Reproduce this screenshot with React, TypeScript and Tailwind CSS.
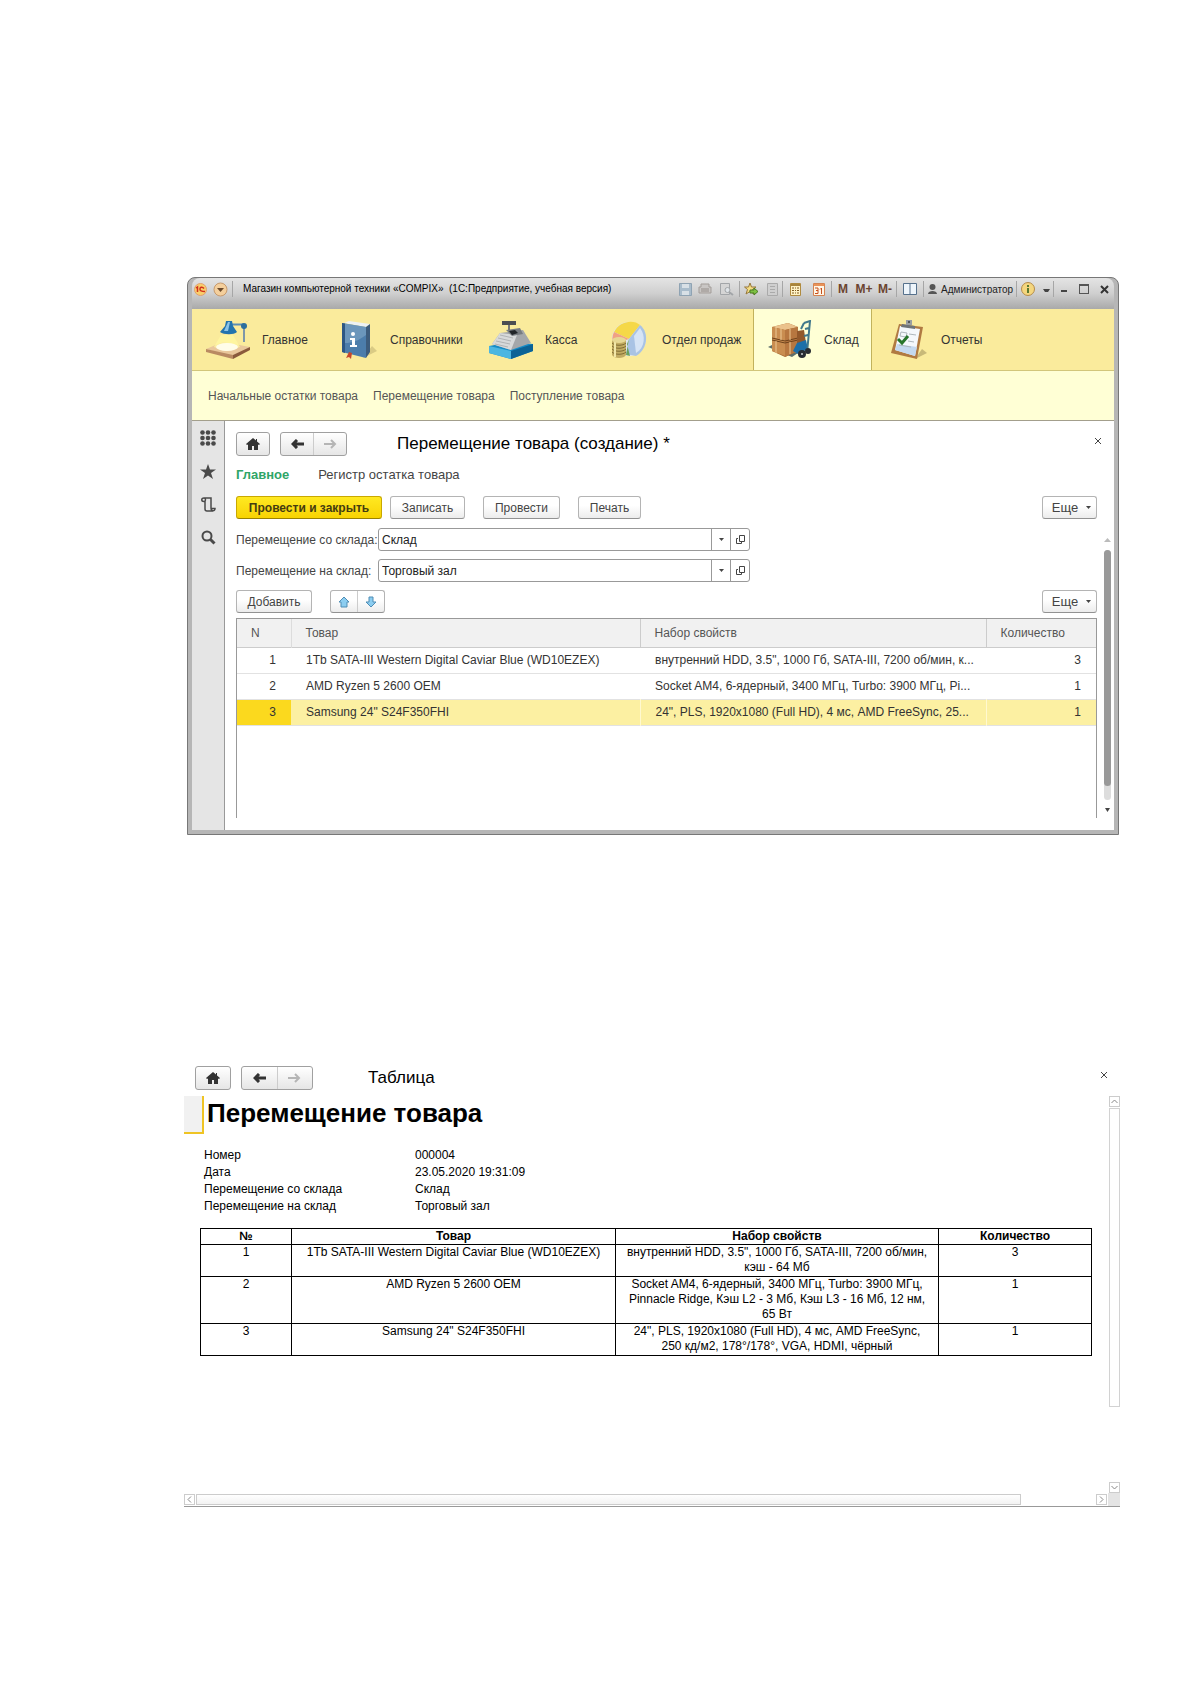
import { useState } from 'react';
import type { ReactNode } from 'react';

interface Product {
  id: number;
  name: string;
  short: string;
  full: string;
  count: number;
}

const products: Product[] = [
  {
    id: 1,
    name: '1Tb SATA-III Western Digital Caviar Blue (WD10EZEX)',
    short: 'внутренний HDD, 3.5", 1000 Гб, SATA-III, 7200 об/мин, к...',
    full: 'внутренний HDD, 3.5", 1000 Гб, SATA-III, 7200 об/мин, кэш - 64 Мб',
    count: 3,
  },
  {
    id: 2,
    name: 'AMD Ryzen 5 2600 OEM',
    short: 'Socket AM4, 6-ядерный, 3400 МГц, Turbo: 3900 МГц, Pi...',
    full: 'Socket AM4, 6-ядерный, 3400 МГц, Turbo: 3900 МГц, Pinnacle Ridge, Кэш L2 - 3 Мб, Кэш L3 - 16 Мб, 12 нм, 65\u00a0Вт',
    count: 1,
  },
  {
    id: 3,
    name: 'Samsung 24" S24F350FHI',
    short: '24", PLS, 1920x1080 (Full HD), 4 мс, AMD FreeSync, 25...',
    full: '24", PLS, 1920x1080 (Full HD), 4 мс, AMD FreeSync, 250\u00a0кд/м2, 178°/178°, VGA, HDMI, чёрный',
    count: 1,
  },
];

const details = [
  ['Номер', '000004'],
  ['Дата', '23.05.2020 19:31:09'],
  ['Перемещение со склада', 'Склад'],
  ['Перемещение на склад', 'Торговый зал'],
];

/* Section icons */

function LampIcon() {
  return (
    <svg width="44" height="40" viewBox="0 0 44 40">
      <path d="M0 29 17 22 44 27 27 37Z" fill="#e9c79b" />
      <path d="M0 29 27 35V39L0 32Z" fill="#b98a62" />
      <path d="M27 35 44 27V30L27 39Z" fill="#8a5a3c" />
      <path d="M15 15 8 27 20 31 34 27 27 15Z" fill="#fff7a0" opacity=".8" />
      <ellipse cx="21" cy="27" rx="11" ry="4" fill="#fffde8" />
      <path d="M26 4.500H38" stroke="#5b8db5" strokeWidth="2" />
      <path d="M38 7V22" stroke="#7f97a8" strokeWidth="2" />
      <path d="M20 1h6l1 5 4 6c-3 3-13 3-17 0l5-6Z" fill="#2374ae" />
      <path d="M22 2h2l-2 9h-4Z" fill="#8cc4e6" />
      <circle cx="38" cy="6" r="3" fill="#2d6f9e" />
    </svg>
  );
}

function BookIcon() {
  return (
    <svg width="37" height="40" viewBox="0 0 37 40">
      <path d="M22 38 36 31 31 26Z" fill="#b9ab6c" opacity=".5" />
      <path d="M3 3 8 1 29 4 25 7Z" fill="#edf2f4" />
      <path d="M25 7 29 4V32L25 38Z" fill="#3d5c7c" />
      <path d="M1 3 25 7V38L1 32Z" fill="#4c7dab" />
      <path d="M1 3 4 3.500V33L1 32Z" fill="#2d5784" />
      <path d="M4 3.500 25 7V15C17 21 11 23 4 23Z" fill="#80a6c6" opacity=".6" />
      <circle cx="12" cy="14" r="2" fill="#fff" />
      <path d="M9 18H14V25H16V27H9V25H11V20H9Z" fill="#fff" />
      <path d="M8 32 5 38 8 37 10 39 11 33Z" fill="#c8472b" />
    </svg>
  );
}

function RegisterIcon() {
  return (
    <svg width="44" height="40" viewBox="0 0 44 40">
      <path d="M0 26 22 22 44 24V31L22 39 0 33Z" fill="#168cc7" />
      <path d="M0 26 22 31V39L0 33Z" fill="#4cb6e1" />
      <path d="M22 31 44 24V31L22 39Z" fill="#0b6296" />
      <path d="M3 24 11 13 34 10 42 23 22 30Z" fill="#a4a7aa" />
      <path d="M3 24 11 13 28 15 22 30Z" fill="#d7d9da" />
      <path d="M7 21 21 24M9 18 22 21M11 15 24 18M6 24 19 27" stroke="#b0b3b5" strokeWidth="1" />
      <path d="M17 10 31 8 34 14 23 16Z" fill="#777c81" />
      <path d="M20 11 26 10 29 13 23 15Z" fill="#202428" />
      <path d="M20 3V10" stroke="#777" strokeWidth="2" />
      <rect x="13" y="1" width="14" height="4" fill="#4c4e51" />
    </svg>
  );
}

function SalesIcon() {
  return (
    <svg width="42" height="40" viewBox="-1 0 42 40">
      <circle cx="20" cy="19" r="17" fill="#dfe6ef" />
      <path d="M20 19 5 12C10 1 25-1 31 5Z" fill="#f5d848" />
      <path d="M20 19 5 12C3 16 3 20 4 24L14 21Z" fill="#f0a184" />
      <path d="M20 19 31 5C41 13 38 30 27 36L17 34Z" fill="#a9c3e4" />
      <path d="M25 16 31 8C37 15 36 28 27 33Z" fill="#d6e4f5" />
      <path d="M18 24 20 19 17 35 21 36Z" fill="#69a25c" />
      <path d="M3 20V35C5 39 15 39 17 35V20Z" fill="#c2ac62" />
      <path d="M3 23C6 26 14 26 17 23M3 26C6 29 14 29 17 26M3 29C6 32 14 32 17 29M3 32C6 35 14 35 17 32" stroke="#806c34" fill="none" />
      <path d="M6 22V37" stroke="#f2e7a8" strokeWidth="2" />
      <ellipse cx="10" cy="20" rx="7" ry="3" fill="#e7d894" />
    </svg>
  );
}

function StoreIcon() {
  return (
    <svg width="44" height="40" viewBox="0 0 44 40">
      <path d="M0 27 4 25 30 33 24 37Z" fill="#5f6f6b" />
      <path d="M4 7 20 3 30 7V31L17 37 4 31Z" fill="#a96a33" />
      <path d="M4 7 20 3 30 7 17 10Z" fill="#ebc28c" />
      <path d="M4 7 17 10V36L4 31Z" fill="#c98d50" />
      <path d="M17 10 30 7V31L17 37Z" fill="#b77740" />
      <path d="M4 18 17 21 30 18M4 20 17 23 30 20" stroke="#6e421c" fill="none" />
      <path d="M8 7V18M13 9V20M8 21V33M22 9V20M22 22V34" stroke="#edc994" />
      <path d="M29 11 36 10 38 23 29 26Z" fill="#92582b" />
      <path d="M29 23 38 20 40 29 30 34 25 31Z" fill="#1d6fa8" />
      <path d="M36 3 42 1 39 33M36 3 33 9M37 9 41 8M36 16 40 15" stroke="#41788c" strokeWidth="2" fill="none" />
      <circle cx="34" cy="34" r="4" fill="#292d31" />
      <circle cx="40" cy="31" r="3" fill="#292d31" />
      <circle cx="34" cy="34" r="1" fill="#c8ced0" />
    </svg>
  );
}

function ReportIcon() {
  return (
    <svg width="43" height="42" viewBox="-5 0 43 42">
      <path d="M24 40 36 34 31 30Z" fill="#a79760" opacity=".6" />
      <path d="M8 5 32 8 26 40 0 34Z" fill="#b07a42" />
      <path d="M9 7 29 10 24 37 4 31Z" fill="#f4f8fc" />
      <path d="M6 25 26 28 24 37 4 31Z" fill="#c4d9f0" />
      <path d="M11 5 24 7V10L10 8Z" fill="#6f7478" />
      <path d="M15 1h6v5h-6Z" fill="#9a9ea2" />
      <circle cx="18" cy="3" r="1" fill="#3b3e42" />
      <path d="M10 13 16 14 15 18 9 17ZM18 15 25 16M17 22 23 23M8 26 20 28" stroke="#aeb7bd" fill="none" />
      <path d="M7 20 11 24 17 17" stroke="#27752b" strokeWidth="3" fill="none" />
    </svg>
  );
}

/* Small icons */

function HomeIcon() {
  return (
    <svg width="14" height="12" viewBox="0 0 14 12">
      <path d="M7 0 0 6 1 7 2 6.500V12H6V8H8V12H12V6.500L13 7 14 6 11 3.500V1H10V2.500Z" fill="#333" />
    </svg>
  );
}

function ArrowIcon({ right = false }: { right?: boolean }) {
  return (
    <svg width="13" height="10" viewBox="0 0 13 10" fill="none" strokeWidth="2">
      {right ? (
        <path d="M0 5H11M7 1 11 5 7 9" stroke="#b5b5b5" />
      ) : (
        <path d="M13 5H2M6 1 2 5 6 9" stroke="#333" strokeWidth="3" />
      )}
    </svg>
  );
}

function MoveIcon({ down = false }: { down?: boolean }) {
  return (
    <svg width="12" height="12" viewBox="0 0 12 12">
      <path
        d={down ? 'M6 11 1 6H4V1H8V6H11Z' : 'M6 1 11 6H9V11H3V6H1Z'}
        fill="#8ccdf0"
        stroke="#4f8db5"
      />
    </svg>
  );
}

function Caret() {
  return (
    <svg width="5" height="3" viewBox="0 0 5 3">
      <path d="M0 0H5L2.500 3Z" fill="#444" />
    </svg>
  );
}

function OpenIcon() {
  return (
    <svg width="9" height="9" viewBox="0 0 9 9" fill="none" stroke="#444">
      <path d="M3.500 .5H8.500V6.500H3.500ZM2 3.500H.5V8.500H5.500V7" />
    </svg>
  );
}

function Cross() {
  return (
    <svg width="8" height="8" viewBox="0 0 8 8" stroke="#444">
      <path d="M1 1 7 7M7 1 1 7" />
    </svg>
  );
}

function Chevron({ d }: { d: string }) {
  return (
    <svg width="7" height="7" viewBox="0 0 7 7" fill="none" stroke="#888">
      <path d={d} />
    </svg>
  );
}

/* Title bar */

function Separator() {
  return <span className="h-4 w-px shrink-0 bg-[#a6a6a6]" />;
}

function BarButton({ label, className, children }: { label: string; className: string; children: ReactNode }) {
  return (
    <button aria-label={label} className={`flex h-5 shrink-0 items-center justify-center ${className}`}>
      {children}
    </button>
  );
}

function TitleBar() {
  return (
    <header className="flex h-[31px] items-start rounded-t-lg bg-linear-to-b from-[#e4e4e4] via-[#cfcfcf] to-[#a9a9a9] pt-px">
      <div className="flex h-5 items-center">
        <BarButton label="1С" className="w-4">
          <svg width="13" height="13" viewBox="0 0 13 13">
            <circle cx="6.500" cy="6.500" r="6" fill="#f9cf6b" stroke="#e0a070" />
            <path d="M2 5 3.500 4V9M10 5.500C8 3 5.500 4.500 6 6.500 6.200 8.500 8 8.500 11 8.500" stroke="#d2301c" strokeWidth="1.500" fill="none" />
          </svg>
        </BarButton>
        <BarButton label="Меню" className="w-6">
          <svg width="15" height="15" viewBox="0 0 15 15">
            <circle cx="7.500" cy="7.500" r="6.500" fill="#f4cf9c" stroke="#c79a6d" />
            <path d="M4 6H11L7.500 10Z" fill="#6b4a2c" />
          </svg>
        </BarButton>
        <Separator />
      </div>
      <h1 className="min-w-0 flex-1 truncate pl-[10px] text-[10px] leading-5 whitespace-pre text-black">
        Магазин компьютерной техники «COMPIX»  (1С:Предприятие, учебная версия)
      </h1>
      <div className="flex h-5 items-center text-[12px] text-[#222]">
        <BarButton label="Сохранить" className="w-5">
          <svg width="13" height="13" viewBox="0 0 13 13">
            <path d="M.5 .5H12.500V12.500H.5Z" fill="#a9bccb" stroke="#8fa3b3" />
            <path d="M3 1H10V5H3ZM3 8H10V12H3Z" fill="#d8e0e6" />
          </svg>
        </BarButton>
        <BarButton label="Печать" className="w-5">
          <svg width="14" height="12" viewBox="0 0 14 12">
            <path d="M3 1H11V4H13V10H1V4H3Z" fill="#c9c6c4" stroke="#a39d99" />
            <path d="M3 6H11M3 8H11" stroke="#958e8a" />
          </svg>
        </BarButton>
        <BarButton label="Просмотр" className="w-6">
          <svg width="14" height="13" viewBox="0 0 14 13" fill="none" stroke="#a2a5a8">
            <path d="M.5 .5H9.500V11.500H.5Z" fill="#d5d5d5" />
            <circle cx="7.500" cy="7" r="2.500" fill="#dfe4e8" />
            <path d="M9 9 13 12" strokeWidth="2" />
          </svg>
        </BarButton>
        <Separator />
        <BarButton label="Добавить в избранное" className="w-[22px]">
          <svg width="15" height="14" viewBox="0 0 15 14">
            <path d="M6 1 7.500 5H12L8.500 7.500 10 12 6 9.500 2 12 3.500 7.500 .5 5H4.500Z" fill="#f6dd82" stroke="#98793c" />
            <path d="M6 8H10V6L14 9.500 10 13V11H6Z" fill="#7dc142" stroke="#4a7d24" />
          </svg>
        </BarButton>
        <BarButton label="Ссылка" className="w-5">
          <svg width="11" height="13" viewBox="0 0 11 13" stroke="#aaa">
            <path d="M.5 .5H10.500V12.500H.5Z" fill="#cfcfcf" />
            <path d="M3 3.500H8M3 6.500H8M3 9.500H8" />
          </svg>
        </BarButton>
        <Separator />
        <BarButton label="Калькулятор" className="w-6">
          <svg width="11" height="13" viewBox="0 0 11 13">
            <path d="M.5 .5H10.500V12.500H.5Z" fill="#fff2c4" stroke="#b08b3f" />
            <path d="M1 1H10V3H1Z" fill="#a8843c" />
            <path d="M2 5H4M5 5H6M7 5H9M2 7.500H4M5 7.500H6M7 7.500H9M2 10H4M5 10H6M7 10H9" stroke="#805c22" />
          </svg>
        </BarButton>
        <BarButton label="Календарь" className="w-6">
          <svg width="12" height="13" viewBox="0 0 12 13">
            <path d="M.5 .5H11.500V12.500H.5Z" fill="#fff6e6" stroke="#d58350" />
            <path d="M1 1H11V3H1Z" fill="#e99258" />
            <path d="M2 5H5V10.500H2M3 7.500H5M7 6.500 8.500 5V11" stroke="#c8501e" fill="none" />
          </svg>
        </BarButton>
        <Separator />
        <button className="w-[22px] text-center font-bold text-[#6b4430]">M</button>
        <button className="w-5 text-center font-bold text-[#6b4430]">M+</button>
        <button className="w-[22px] text-center font-bold text-[#6b4430]">M-</button>
        <Separator />
        <BarButton label="Разделить окно" className="w-[26px]">
          <svg width="14" height="12" viewBox="0 0 14 12" stroke="#56718c">
            <path d="M.5 .5H13.500V11.500H.5ZM7 .5V11.500" fill="#eef5fb" />
          </svg>
        </BarButton>
        <Separator />
        <button className="flex h-5 w-[92px] items-center gap-1 pl-1">
          <svg width="9" height="10" viewBox="0 0 9 10" fill="#555" className="shrink-0">
            <circle cx="4.500" cy="3" r="3" />
            <path d="M0 10C0 6 9 6 9 10Z" />
          </svg>
          <span className="text-[10px]">Администратор</span>
        </button>
        <Separator />
        <BarButton label="О программе" className="w-[22px]">
          <svg width="14" height="14" viewBox="0 0 14 14">
            <circle cx="7" cy="7" r="6.500" fill="#f4d67e" stroke="#b58c4a" />
            <path d="M6 6H8V11H6ZM6 3H8V5H6Z" fill="#5a7a32" />
          </svg>
        </BarButton>
        <BarButton label="Ещё" className="w-[14px] pt-1">
          <svg width="7" height="4" viewBox="0 0 7 4">
            <path d="M0 0H7L5 3H2Z" fill="#444" />
          </svg>
        </BarButton>
        <Separator />
        <BarButton label="Свернуть" className="w-5">
          <span className="mt-1 h-[2px] w-[6px] bg-[#444]" />
        </BarButton>
        <BarButton label="Развернуть" className="w-5">
          <span className="h-[10px] w-[10px] border border-t-2 border-[#555]" />
        </BarButton>
        <BarButton label="Закрыть" className="w-5">
          <svg width="9" height="9" viewBox="0 0 9 9" stroke="#333" strokeWidth="2">
            <path d="M1 1 8 8M8 1 1 8" />
          </svg>
        </BarButton>
      </div>
    </header>
  );
}

/* Navigation */

function SectionButton({ icon, label, className, active = false }: { icon: ReactNode; label: string; className: string; active?: boolean }) {
  return (
    <button
      className={`flex shrink-0 items-center border-r pl-[14px] text-left ${className} ${
        active ? 'border-[#c2b25c] bg-[#ffffd5]' : 'border-transparent'
      }`}
    >
      {icon}
      <span className="pl-3">{label}</span>
    </button>
  );
}

function Sections() {
  return (
    <nav className="flex h-[62px] border-b border-[#d2c67a] bg-[#faeb9c] text-[12px] text-[#333]">
      <SectionButton icon={<LampIcon />} label="Главное" className="w-[135px]" />
      <SectionButton icon={<BookIcon />} label="Справочники" className="w-[148px]" />
      <SectionButton icon={<RegisterIcon />} label="Касса" className="w-[119px]" />
      <div className="flex border-r border-[#c2b25c]">
        <SectionButton icon={<SalesIcon />} label="Отдел продаж" className="w-[159px]" />
      </div>
      <SectionButton icon={<StoreIcon />} label="Склад" className="w-[118px]" active />
      <SectionButton icon={<ReportIcon />} label="Отчеты" className="w-[140px]" />
    </nav>
  );
}

function ToolButton({ children, className }: { children: ReactNode; className: string }) {
  return (
    <button
      className={`flex h-[23px] items-center justify-center rounded-[3px] border border-[#b4b4b4] border-b-[#929292] bg-linear-to-b from-white from-40% to-[#ececec] text-[#444] ${className}`}
    >
      {children}
    </button>
  );
}

function NavButtons({ wide = false }: { wide?: boolean }) {
  return (
    <div className="flex gap-[10px]">
      <button
        aria-label="Домой"
        className={`flex h-6 items-center justify-center rounded-[3px] border border-[#a0a0a0] bg-linear-to-b from-white to-[#e6e6e6] ${wide ? 'w-9' : 'w-[34px]'}`}
      >
        <HomeIcon />
      </button>
      <div className={`flex h-6 rounded-[3px] border border-[#a0a0a0] bg-linear-to-b from-white to-[#e6e6e6] ${wide ? 'w-[72px]' : 'w-[67px]'}`}>
        <button aria-label="Назад" className="flex flex-1 items-center justify-center border-r border-[#ccc]">
          <ArrowIcon />
        </button>
        <button aria-label="Вперед" className="flex flex-1 items-center justify-center">
          <ArrowIcon right />
        </button>
      </div>
    </div>
  );
}

function SelectField({ id, label, initial }: { id: string; label: string; initial: string }) {
  const [value, setValue] = useState(initial);

  return (
    <div className="flex h-[23px] items-center">
      <label htmlFor={id} className="w-[142px] text-[12px] whitespace-nowrap text-[#444]">
        {label}
      </label>
      <div className="flex h-full w-[372px] rounded-[3px] border border-[#999] bg-white">
        <input
          id={id}
          value={value}
          onChange={(e) => setValue(e.target.value)}
          className="min-w-0 flex-1 bg-transparent px-[3px] text-[12px] text-[#222] outline-none"
        />
        <button aria-label="Выбрать" className="flex w-[19px] items-center justify-center border-l border-[#999]">
          <Caret />
        </button>
        <button aria-label="Открыть" className="flex w-[19px] items-center justify-center border-l border-[#999]">
          <OpenIcon />
        </button>
      </div>
    </div>
  );
}

function ProductTable() {
  const [selected, setSelected] = useState(3);

  return (
    <div className="h-[200px] border-x border-t border-[#999]">
      <table className="w-full table-fixed border-collapse text-[12px] text-[#333]">
        <colgroup>
          <col className="w-[54px]" />
          <col className="w-[349px]" />
          <col />
          <col className="w-[110px]" />
        </colgroup>
        <thead>
          <tr className="h-7 border-b border-[#ccc] bg-[#f1f1f1] text-left text-[#555]">
            <th className="border-r border-[#dcdcdc] pl-[14px] font-normal">N</th>
            <th className="border-r border-[#ccc] pl-[14px] font-normal">Товар</th>
            <th className="border-r border-[#ccc] pl-[14px] font-normal">Набор свойств</th>
            <th className="pl-[14px] font-normal">Количество</th>
          </tr>
        </thead>
        <tbody>
          {products.map((p) => (
            <tr
              key={p.id}
              onClick={() => setSelected(p.id)}
              className={`h-[26px] border-b border-[#e2e2e2] ${selected === p.id ? 'bg-[#fcf0a2]' : ''}`}
            >
              <td className={`pr-[15px] text-right ${selected === p.id ? 'bg-[#fbd91e]' : ''}`}>{p.id}</td>
              <td className="truncate pl-[15px]">{p.name}</td>
              <td className={`truncate pl-[15px] ${selected === p.id ? 'border-x border-[#fff9d0]' : ''}`}>{p.short}</td>
              <td className="pr-[15px] text-right">{p.count}</td>
            </tr>
          ))}
        </tbody>
      </table>
    </div>
  );
}

function SideBar() {
  return (
    <aside className="flex w-[33px] flex-col items-center gap-[18px] border-r border-[#999] bg-[#e5e5e5] pt-[9px]">
      <button aria-label="Меню функций">
        <svg width="16" height="16" viewBox="0 0 16 16" fill="#4a4a4a">
          <circle cx="2.500" cy="2.500" r="2.300" />
          <circle cx="8" cy="2.500" r="2.300" />
          <circle cx="13.500" cy="2.500" r="2.300" />
          <circle cx="2.500" cy="8" r="2.300" />
          <circle cx="8" cy="8" r="2.300" />
          <circle cx="13.500" cy="8" r="2.300" />
          <circle cx="2.500" cy="13.500" r="2.300" />
          <circle cx="8" cy="13.500" r="2.300" />
          <circle cx="13.500" cy="13.500" r="2.300" />
        </svg>
      </button>
      <button aria-label="Избранное">
        <svg width="16" height="15" viewBox="0 0 16 15" fill="#4a4a4a">
          <path d="M8 0 10 5.500H16L11 9 13 15 8 11.500 3 15 5 9 0 5.500H6Z" />
        </svg>
      </button>
      <button aria-label="История">
        <svg width="15" height="15" viewBox="0 0 15 15" fill="none" stroke="#4a4a4a" strokeWidth="1.500">
          <path d="M3 4.500C0 4.500 0 1 3 1H10V11C10 14.500 14 14.500 14 11.500H10M3 1C5 1 5 4.500 3 4.500M4 4.500V12C4 13.500 5 14 6 14H12" />
        </svg>
      </button>
      <button aria-label="Поиск">
        <svg width="15" height="15" viewBox="0 0 15 15" fill="none" stroke="#4a4a4a">
          <circle cx="6" cy="6" r="4.500" strokeWidth="2" />
          <path d="M9.500 9.500 13.500 13.500" strokeWidth="3" />
        </svg>
      </button>
    </aside>
  );
}

function TransferForm() {
  return (
    <div className="flex min-w-0 flex-1 bg-white pb-3">
      <div className="min-w-0 flex-1 pt-[11px] pl-[11px]">
        <div className="flex items-center">
          <NavButtons />
          <h2 className="pl-[50px] text-[17px] leading-6 text-black">Перемещение товара (создание) *</h2>
        </div>
        <div className="flex gap-[29px] pt-[7px] text-[13px] leading-6">
          <a href="#main" className="font-bold text-[#2fa567]">Главное</a>
          <a href="#register" className="text-[#444]">Регистр остатка товара</a>
        </div>
        <div className="flex pt-[9px]">
          <button className="flex h-[23px] w-[146px] items-center justify-center rounded-[3px] border border-[#c9a800] border-b-[#9a8200] bg-linear-to-b from-[#ffe920] to-[#f8d300] text-[12px] font-bold text-[#443c10]">
            Провести и закрыть
          </button>
          <div className="flex gap-[18px] pl-2">
            <ToolButton className="w-[75px] text-[12px]">Записать</ToolButton>
            <ToolButton className="w-[77px] text-[12px]">Провести</ToolButton>
            <ToolButton className="w-[63px] text-[12px]">Печать</ToolButton>
          </div>
          <ToolButton className="ml-auto w-[55px] gap-2 pl-1 text-[13px]">
            Еще <Caret />
          </ToolButton>
        </div>
        <div className="flex flex-col gap-2 pt-[9px] pb-2">
          <SelectField id="from" label="Перемещение со склада:" initial="Склад" />
          <SelectField id="to" label="Перемещение на склад:" initial="Торговый зал" />
        </div>
        <div className="flex pb-[5px]">
          <ToolButton className="w-[76px] text-[12px]">Добавить</ToolButton>
          <div className="ml-[18px] flex h-[23px] w-[55px] rounded-[3px] border border-[#b4b4b4] border-b-[#929292] bg-linear-to-b from-white from-40% to-[#ececec]">
            <button aria-label="Вверх" className="flex flex-1 items-center justify-center border-r border-[#ccc]">
              <MoveIcon />
            </button>
            <button aria-label="Вниз" className="flex flex-1 items-center justify-center">
              <MoveIcon down />
            </button>
          </div>
          <ToolButton className="ml-auto w-[55px] gap-2 pl-1 text-[13px]">
            Еще <Caret />
          </ToolButton>
        </div>
        <ProductTable />
      </div>
      <div className="flex w-[17px] flex-col items-center pt-4 pb-[6px]">
        <button aria-label="Закрыть форму" className="-ml-[3px] self-start">
          <Cross />
        </button>
        <div className="flex flex-1 flex-col items-center pt-[93px] pl-1">
          <svg width="7" height="4" viewBox="0 0 7 4">
            <path d="M0 4H7L3.500 0Z" fill="#bbb" />
          </svg>
          <div className="mt-2 flex w-[7px] flex-1 flex-col rounded-full bg-[#ddd] pb-[14px]">
            <div className="flex-1 rounded-full bg-[#999]" />
          </div>
          <svg width="5" height="4" viewBox="0 0 5 4" className="mt-2">
            <path d="M0 0H5L2.500 4Z" fill="#444" />
          </svg>
        </div>
      </div>
    </div>
  );
}

function MainWindow() {
  return (
    <section className="rounded-t-lg border border-[#777] bg-[#b6b6b6] px-1 pb-1">
      <TitleBar />
      <Sections />
      <nav className="flex h-[50px] items-center gap-[15px] border-b border-[#a39f8c] bg-[#ffffd5] pl-4 text-[12px] text-[#555]">
        <a href="#stock">Начальные остатки товара</a>
        <a href="#transfer">Перемещение товара</a>
        <a href="#receipt">Поступление товара</a>
      </nav>
      <div className="flex">
        <SideBar />
        <TransferForm />
      </div>
    </section>
  );
}

function ReportWindow() {
  return (
    <section className="border-b border-[#999] text-[12px] text-black">
      <div className="flex items-center pl-[11px]">
        <NavButtons wide />
        <h2 className="pl-[55px] text-[17px] leading-6">Таблица</h2>
        <button aria-label="Закрыть таблицу" className="mr-3 mb-[6px] ml-auto">
          <Cross />
        </button>
      </div>
      <div className="flex pt-[6px]">
        <div className="min-w-0 flex-1">
          <div className="flex">
            <div className="h-[38px] w-5 border-r-2 border-b-2 border-[#efc424] bg-[#f1f1f1]" />
            <h3 className="pl-[3px] text-[26px] leading-[34px] font-bold">Перемещение товара</h3>
          </div>
          <dl className="grid grid-cols-[211px_1fr] pt-[13px] pl-5 leading-[17px]">
            {details.map(([name, value]) => (
              <div key={name} className="contents">
                <dt>{name}</dt>
                <dd>{value}</dd>
              </div>
            ))}
          </dl>
          <div className="pt-[13px] pr-[17px] pl-4">
            <table className="w-full table-fixed border-collapse text-center leading-[15px]">
              <colgroup>
                <col className="w-[91px]" />
                <col className="w-[324px]" />
                <col className="w-[323px]" />
                <col />
              </colgroup>
              <thead>
                <tr>
                  <th className="border border-black">№</th>
                  <th className="border border-black">Товар</th>
                  <th className="border border-black">Набор свойств</th>
                  <th className="border border-black">Количество</th>
                </tr>
              </thead>
              <tbody>
                {products.map((p) => (
                  <tr key={p.id} className="align-top">
                    <td className="border border-black pb-px">{p.id}</td>
                    <td className="border border-black pb-px">{p.name}</td>
                    <td className="border border-black pb-px">{p.full}</td>
                    <td className="border border-black pb-px">{p.count}</td>
                  </tr>
                ))}
              </tbody>
            </table>
          </div>
        </div>
        <div className="flex w-[11px] flex-col">
          <button aria-label="Прокрутить вверх" className="flex h-[11px] items-center justify-center border border-[#ccc]">
            <Chevron d="M.5 5 3.500 2 6.500 5" />
          </button>
          <div className="mt-px h-[299px] border border-[#d2d2d2]" />
          <button aria-label="Прокрутить вниз" className="mt-[75px] flex h-[11px] items-center justify-center border border-[#ccc]">
            <Chevron d="M.5 2 3.500 5 6.500 2" />
          </button>
        </div>
      </div>
      <div className="flex h-[13px] items-center">
        <button aria-label="Прокрутить влево" className="flex h-[11px] w-[11px] items-center justify-center border border-[#ccc]">
          <Chevron d="M5 .5 2 3.500 5 6.500" />
        </button>
        <div className="mr-[75px] ml-px h-[11px] flex-1 border border-[#ccc] bg-linear-to-b from-white to-[#f2f2f2]" />
        <button aria-label="Прокрутить вправо" className="flex h-[11px] w-[11px] items-center justify-center border border-[#ccc]">
          <Chevron d="M2 .5 5 3.500 2 6.500" />
        </button>
        <div className="ml-px h-full w-3 bg-[#e4e4e4]" />
      </div>
    </section>
  );
}

export default function App() {
  return (
    <div className="min-h-screen bg-white font-['Liberation_Sans',Arial,sans-serif]">
      <main className="flex flex-col pt-[277px] pr-[71px] pb-[177px] pl-[184px]">
        <div className="pr-px pl-[3px]">
          <MainWindow />
        </div>
        <div className="pt-[231px]">
          <ReportWindow />
        </div>
      </main>
    </div>
  );
}
